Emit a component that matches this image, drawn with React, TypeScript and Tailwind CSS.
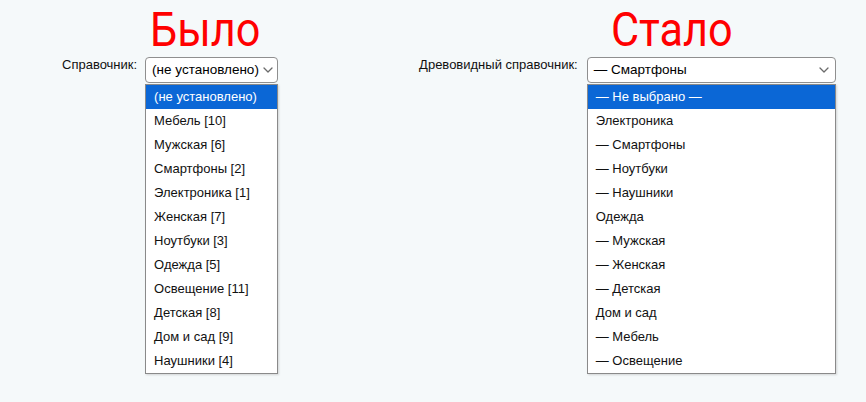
const oldItems = [
  "(не установлено)",
  "Мебель [10]",
  "Мужская [6]",
  "Смартфоны [2]",
  "Электроника [1]",
  "Женская [7]",
  "Ноутбуки [3]",
  "Одежда [5]",
  "Освещение [11]",
  "Детская [8]",
  "Дом и сад [9]",
  "Наушники [4]",
];

const newItems = [
  "— Не выбрано —",
  "Электроника",
  "— Смартфоны",
  "— Ноутбуки",
  "— Наушники",
  "Одежда",
  "— Мужская",
  "— Женская",
  "— Детская",
  "Дом и сад",
  "— Мебель",
  "— Освещение",
];

function Chevron() {
  return (
    <svg width="10" height="6" viewBox="0 0 10 6" fill="none" className="shrink-0">
      <path d="M1 1l4 4 4-4" stroke="#6b6b6b" strokeWidth="1.3" strokeLinecap="round" strokeLinejoin="round" />
    </svg>
  );
}

function OpenSelect({ value, items, width }: { value: string; items: string[]; width: string }) {
  return (
    <div className={`flex flex-col ${width}`}>
      <div className="flex h-[26px] items-center justify-between gap-1 rounded-[4px] border border-[#8f8f8f] bg-white pl-[6px] pr-[6px] text-[13.5px] text-black">
        <span className="whitespace-nowrap">{value}</span>
        <Chevron />
      </div>
      <div className="mt-[1px] border border-[#8a8a8a] bg-white shadow-[1px_1px_2px_rgba(0,0,0,0.15)]">
        {items.map((item, i) => (
          <div
            key={item}
            className={[
              "flex h-[24px] items-center whitespace-nowrap px-[8px] text-[13px]",
              i === 0 ? "bg-[#0b67d6] text-white" : "text-[#111]",
            ].join(" ")}
          >
            {item}
          </div>
        ))}
      </div>
    </div>
  );
}

export default function App() {
  return (
    <div className="h-[402px] w-[866px] overflow-hidden bg-[#f5f9fa] font-[family-name:Liberation_Sans,Arial,sans-serif]">
      <div className="flex pl-[62px] pt-[4px]">
        <div className="flex flex-col">
          <div className="ml-[88px] h-[53px] origin-left scale-x-90 font-[family-name:Roboto,sans-serif] text-[48px] leading-[52px] text-[#ff0000]">
            Было
          </div>
          <div className="flex items-start gap-[8px]">
            <span className="-mt-[2px] text-[13px] text-[#111]">Справочник:</span>
            <OpenSelect value="(не установлено)" items={oldItems} width="w-[133px]" />
          </div>
        </div>

        <div className="ml-[141px] flex flex-col">
          <div className="ml-[192px] h-[53px] origin-left scale-x-90 font-[family-name:Roboto,sans-serif] text-[48px] leading-[52px] text-[#ff0000]">
            Стало
          </div>
          <div className="flex items-start gap-[9px]">
            <span className="-mt-[2px] text-[13px] text-[#111]">Древовидный справочник:</span>
            <OpenSelect value="— Смартфоны" items={newItems} width="w-[249px]" />
          </div>
        </div>
      </div>
    </div>
  );
}
